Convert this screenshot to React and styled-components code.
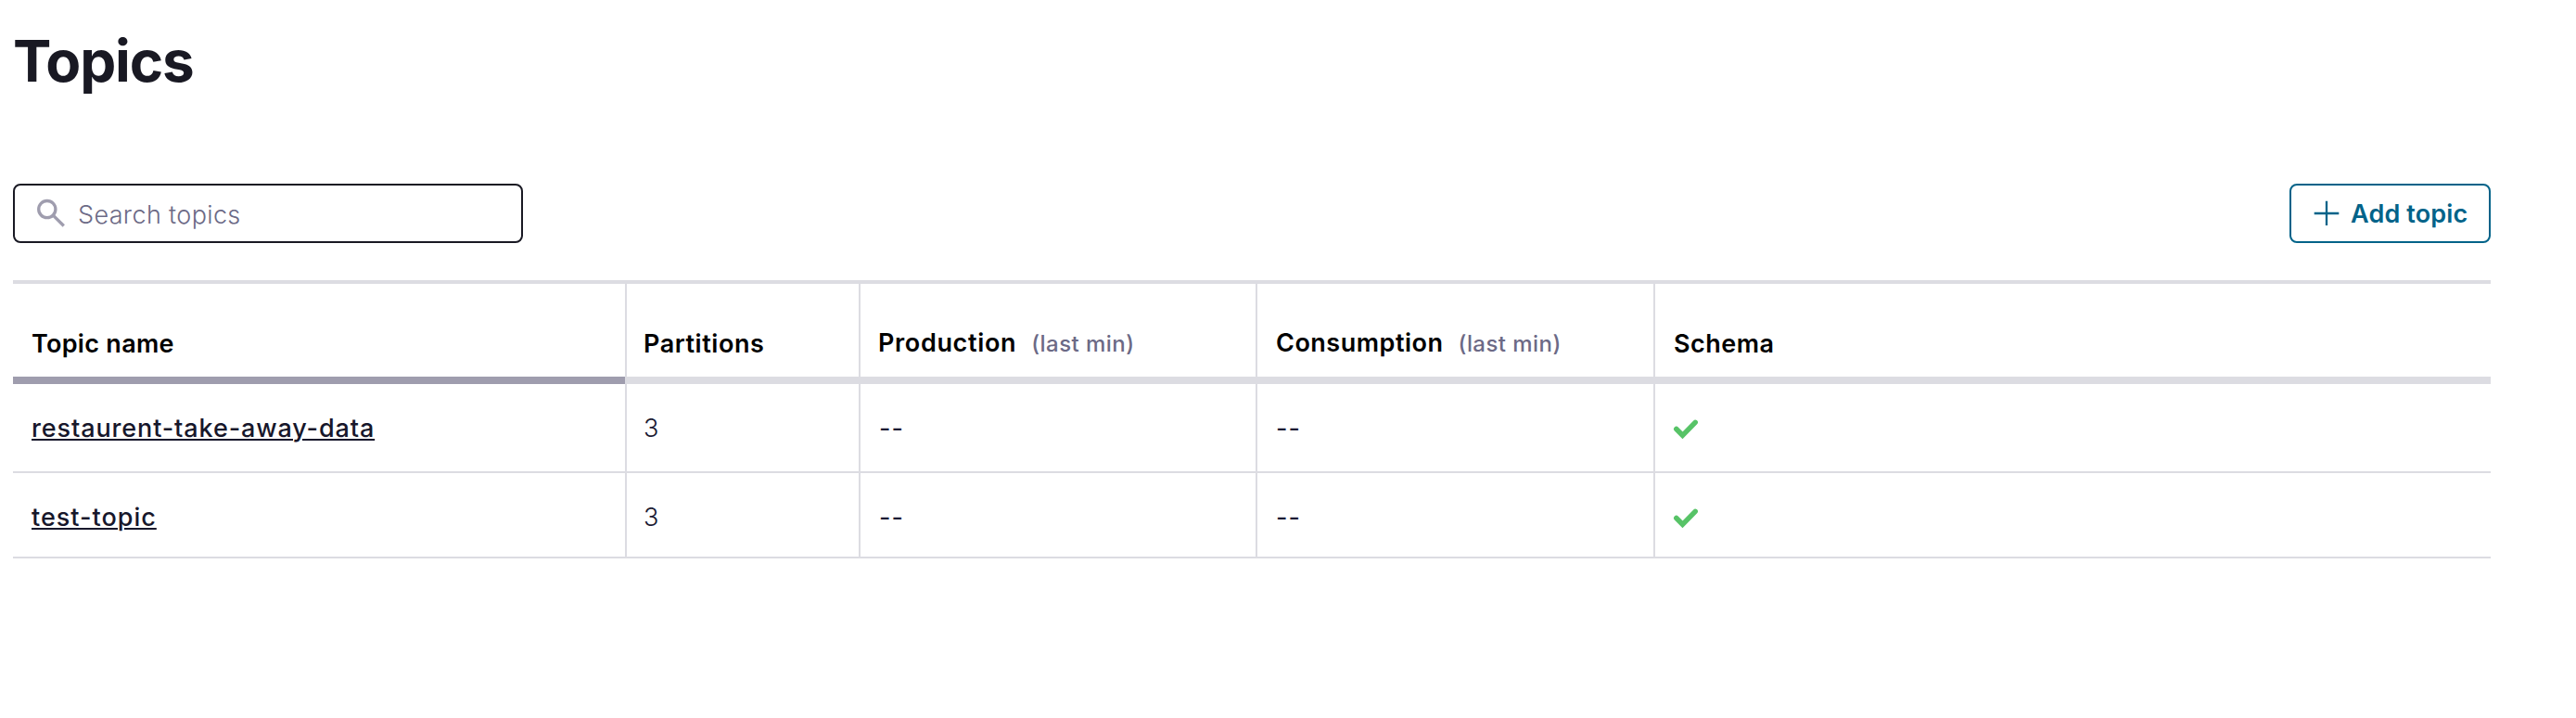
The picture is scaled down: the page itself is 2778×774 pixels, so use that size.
import React from 'react';
import styled, { createGlobalStyle } from 'styled-components';

const GlobalStyle = createGlobalStyle`
  * { box-sizing: border-box; }
  body {
    margin: 0;
    background: #fff;
    font-family: Inter, 'Liberation Sans', sans-serif;
  }
`;

const Page = styled.main`
  display: flex;
  flex-direction: column;
  width: 2700px;
  height: 774px;
  padding: 30px 14px 0;
`;

const Title = styled.h1`
  margin: 0 0 96px;
  font-size: 62px;
  line-height: 72px;
  font-weight: 700;
  letter-spacing: -1.2px;
  color: #191923;
`;

const Toolbar = styled.div`
  display: flex;
  justify-content: space-between;
  height: 64px;
  margin-bottom: 40px;
`;

const SearchBox = styled.label`
  display: flex;
  align-items: center;
  gap: 12px;
  width: 550px;
  padding-left: 24px;
  border: 2px solid #191923;
  border-radius: 8px;
`;

const SearchInput = styled.input`
  flex: 1;
  min-width: 0;
  height: 56px;
  padding: 2px 0 0;
  border: 0;
  outline: 0;
  background: transparent;
  font: 300 27px Inter, 'Liberation Sans', sans-serif;
  letter-spacing: 0.35px;
  color: #191923;
  &::placeholder { color: #6c6a86; opacity: 1; }
`;

const AddButton = styled.button`
  display: flex;
  align-items: center;
  gap: 12px;
  width: 217px;
  padding: 0 0 0 24px;
  border: 2px solid #016389;
  border-radius: 8px;
  background: #fff;
  font: 600 27px Inter, 'Liberation Sans', sans-serif;
  letter-spacing: 0.15px;
  color: #016389;
  white-space: nowrap;
`;

const Table = styled.div`
  display: flex;
  flex-direction: column;
  border-top: 4px solid #dcdce2;
`;

const Row = styled.div`
  display: grid;
  grid-template-columns: 660px 252px 428px 429px 1fr;
  height: ${(p) => p.$height}px;
`;

const HeaderCell = styled.div`
  display: flex;
  align-items: baseline;
  padding: ${(p) => (p.$raised ? 44 : 45)}px 0 0 ${(p) => p.$indent || 20}px;
  border-bottom: 8px solid ${(p) => (p.$sorted ? '#9f9dae' : '#dcdce2')};
  background: ${(p) => (p.$first ? 'none' : 'linear-gradient(#dcdce2, #dcdce2) left / 2px 100% no-repeat')};
  font-size: 27px;
  font-weight: 600;
  line-height: 40px;
  letter-spacing: ${(p) => p.$tracking || 0}px;
  color: #000;
`;

const Unit = styled.span`
  margin-left: 16px;
  font-size: 24px;
  font-weight: 450;
  letter-spacing: 0.45px;
  color: #6c6a86;
`;

const Cell = styled.div`
  display: flex;
  align-items: flex-start;
  padding: 28px 0 0 20px;
  border-bottom: 2px solid #dcdce2;
  background: ${(p) => (p.$first ? 'none' : 'linear-gradient(#dcdce2, #dcdce2) left / 2px 100% no-repeat')};
  font-size: 27px;
  font-weight: 300;
  line-height: 40px;
  color: #1a1a33;
`;

const TopicLink = styled.a`
  font-weight: 500;
  letter-spacing: ${(p) => p.$tracking}px;
  color: #17172b;
  text-decoration: underline;
  text-decoration-thickness: 2px;
  text-underline-offset: 2px;
`;

const Dashes = styled.span`
  padding-left: 2px;
  font-weight: 400;
  letter-spacing: 1.2px;
`;

const CheckSvg = styled.svg`
  margin: 9px 0 0 1px;
`;

const SearchIcon = () => (
  <svg width="32" height="32" viewBox="0 0 32 32" fill="none" stroke="#9f9dae">
    <circle cx="10.8" cy="11.6" r="9.1" strokeWidth="3.3" />
    <path d="M17.3 18.1 28.8 29.5" strokeWidth="3.3" />
  </svg>
);

const PlusIcon = () => (
  <svg width="28" height="28" viewBox="0 0 28 28" fill="none" stroke="currentColor" strokeWidth="2.3">
    <path d="M14 .7v26.4M.7 14h26.6" />
  </svg>
);

const CheckIcon = () => (
  <CheckSvg width="28" height="24" viewBox="0 0 28 24" fill="none" stroke="#57c367" strokeWidth="5.5" strokeLinecap="round">
    <path d="M3.8 11.5 10.5 18.3 24.2 4.3" />
  </CheckSvg>
);

const topics = [
  { name: 'restaurent-take-away-data', tracking: 0.88, height: 96 },
  { name: 'test-topic', tracking: 1, height: 92 },
];

export default function App() {
  return (
    <Page>
      <GlobalStyle />
      <Title>Topics</Title>
      <Toolbar>
        <SearchBox>
          <SearchIcon />
          <SearchInput placeholder="Search topics" />
        </SearchBox>
        <AddButton>
          <PlusIcon />
          Add topic
        </AddButton>
      </Toolbar>
      <Table>
        <Row $height={108}>
          <HeaderCell $first $sorted $tracking={0.29}>Topic name</HeaderCell>
          <HeaderCell $tracking={0.55}>Partitions</HeaderCell>
          <HeaderCell $raised $indent={21} $tracking={0.65}>
            Production<Unit>(last min)</Unit>
          </HeaderCell>
          <HeaderCell $raised $indent={22} $tracking={0.5}>
            Consumption<Unit>(last min)</Unit>
          </HeaderCell>
          <HeaderCell $indent={22} $tracking={0.5}>Schema</HeaderCell>
        </Row>
        {topics.map((t) => (
          <Row key={t.name} $height={t.height}>
            <Cell $first>
              <TopicLink $tracking={t.tracking}>{t.name}</TopicLink>
            </Cell>
            <Cell>3</Cell>
            <Cell><Dashes>--</Dashes></Cell>
            <Cell><Dashes>--</Dashes></Cell>
            <Cell><CheckIcon /></Cell>
          </Row>
        ))}
      </Table>
    </Page>
  );
}
